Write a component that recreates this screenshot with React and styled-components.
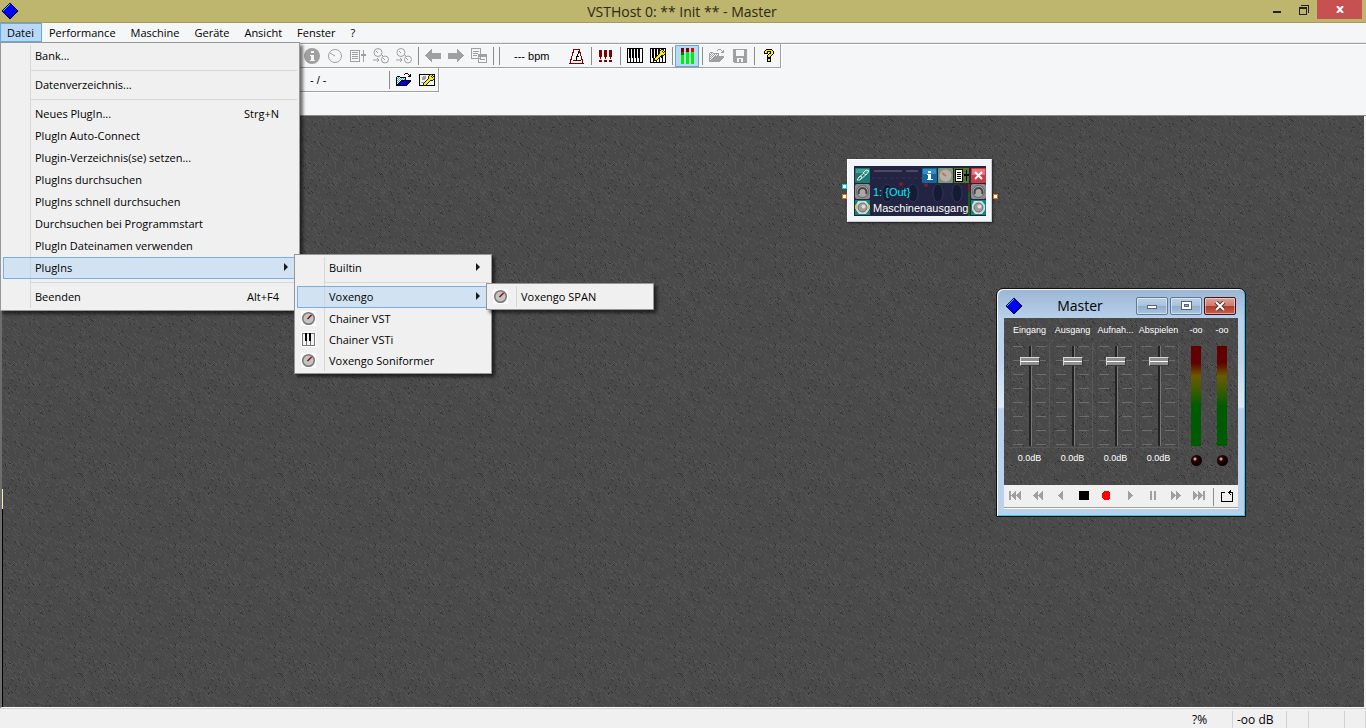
import React from 'react'
import styled, { createGlobalStyle, css } from 'styled-components';

const svgUrl = (svg) => `url("data:image/svg+xml,${encodeURIComponent(svg)}")`;

// Rough slate surface, one seamless 100x100 tile
const makeSlate = () => {
    let seed = 4711;
    const rnd = (n) => {
        seed = (seed * 48271) % 2147483647;
        return Math.floor((seed / 2147483647) * n);
    };
    let light = '';
    let dark = '';
    const streak = (length) => {
        const x = rnd(100);
        const y = rnd(100);
        let d = '';
        for (let i = 0; i < length; i++) {
            d += `M${(x + i) % 100} ${(y + i) % 100}h1v1h-1z`;
        }
        return d;
    };
    for (let i = 0; i < 700; i++) {
        light += rnd(3) ? streak(2 + rnd(3)) : `M${rnd(100)} ${rnd(98)}h1v2h-1z`;
    }
    for (let i = 0; i < 190; i++) {
        dark += streak(rnd(4) ? 1 : 2);
    }
    return svgUrl(`<svg xmlns="http://www.w3.org/2000/svg" width="100" height="100" shape-rendering="crispEdges"><rect width="100" height="100" fill="#494949"/><path d="${light}" fill="#545454"/><path d="${dark}" fill="#303036"/></svg>`);
}

const slate = makeSlate();

const rack = svgUrl(`<svg xmlns="http://www.w3.org/2000/svg" width="132" height="50"><rect width="132" height="50" fill="#232342"/><path d="M20 5h28M52 5h12" stroke="#4a4a68" stroke-width="2"/><path d="M18 12h60M84 11h22" stroke="#35355a" stroke-dasharray="3 3"/><g fill="#151b33" stroke="#30355a"><ellipse cx="33" cy="27" rx="5" ry="9"/><ellipse cx="59" cy="27" rx="5" ry="9"/><ellipse cx="84" cy="27" rx="5" ry="9"/><ellipse cx="103" cy="27" rx="5" ry="9"/></g><g fill="#7a1c3c"><circle cx="47" cy="18" r="2"/><circle cx="72" cy="19" r="2"/></g><path d="M115 24v26" stroke="#1c5a1c" stroke-width="2"/><path d="M115 18v8" stroke="#7a1c1c" stroke-width="2"/></svg>`);

const GlobalStyle = createGlobalStyle`
*{
box-sizing: border-box;
}
body{
margin: 0;
background: #f0f0f0;
color: #000000;
font-family: "Open Sans", sans-serif;
font-size: 11px;
overflow: hidden;
}
button{
font: inherit;
color: inherit;
padding: 0;
border: 0;
background: none;
}
svg{
display: block;
}
ul{
list-style: none;
margin: 0;
padding: 0;
}
`

const Shell = styled.div`
height: 100vh;
display: flex;
flex-direction: column;
`
const TitleBar = styled.header`
height: 23px;
flex: none;
display: grid;
grid-template-columns: 1fr auto 1fr;
background: #beb56e;
border-bottom: 1px solid #a39b58;
padding: 0 4px 0 2px;
`
const AppTitle = styled.h1`
margin: 0;
font-size: 14px;
line-height: 24px;
font-weight: 400;
color: #2b2914;
`
const LogoBox = styled.div`
padding-top: 3px;
`
const Caption = styled.div`
display: flex;
justify-content: flex-end;
align-items: flex-start;
`
const CaptionButton = styled.button`
width: ${(p) => (p.$close ? 45 : 27)}px;
height: 19px;
display: grid;
place-items: center;
background: ${(p) => (p.$close ? '#c75050' : 'transparent')};
`

// Menu bar and its popups
const MenuBar = styled.nav`
flex: none;
height: 20px;
background: #f5f6f7;
display: flex;
border-bottom: 1px solid #e8e9ea;
`
const MenuSlot = styled.div`
position: relative;
`
const MenuButton = styled.button`
height: 19px;
line-height: 16px;
padding: 0 7px 0 6px;
border: 1px solid ${(p) => (p.$open ? '#64a8ea' : 'transparent')};
background: ${(p) => (p.$open ? '#b9d8f7' : 'transparent')};
`
const Popup = styled.ul`
position: absolute;
z-index: 5;
width: ${(p) => p.$width}px;
padding: 2px;
border: 1px solid #979797;
background: linear-gradient(#d7d7d7, #d7d7d7) 29px 2px / 1px calc(100% - 4px) no-repeat #f0f0f0;
box-shadow: 3px 3px 3px rgba(0, 0, 0, 0.55);
${(p) => p.$sub ? css`
left: calc(100% - 3px);
top: -3px;
` : css`
left: 0;
top: 19px;
`}
`
const Row = styled.li`
position: relative;
`
const Entry = styled.button`
width: 100%;
height: ${(p) => (p.$small ? 21 : 22)}px;
display: grid;
grid-template-columns: 32px 1fr auto;
align-items: center;
text-align: left;
padding-right: ${(p) => (p.$arrow ? 9 : 18)}px;
padding-bottom: ${(p) => (p.$small ? 0 : 2)}px;
${(p) => p.$open && css`
background: rgba(178, 214, 246, 0.5);
box-shadow: inset 0 0 0 1px #78aee5;
`}
`
const EntryIcon = styled.span`
margin-left: 4px;
width: 15px;
height: 15px;
background: #ffffff;
`
const Divider = styled.li`
height: 7px;
margin-left: 28px;
border-top: 3px solid #f0f0f0;
background: linear-gradient(#d7d7d7, #d7d7d7) 0 0 / 100% 1px no-repeat;
`
const Arrow = styled.span`
border-left: 4px solid #1a1a1a;
border-top: 4px solid transparent;
border-bottom: 4px solid transparent;
`

// Tool bars
const Bands = styled.section`
flex: none;
height: 73px;
background: #f5f6f7;
border-top: 1px solid #a0a0a0;
border-bottom: 1px solid #8a8a8a;
box-shadow: inset 0 1px #ffffff;
`
const Band = styled.div`
width: fit-content;
height: 24px;
display: flex;
align-items: center;
padding: 0 0 0 300px;
border-right: 1px solid #a0a0a0;
border-bottom: 1px solid #a0a0a0;
box-shadow: 1px 1px #ffffff;
`
const Tool = styled.button`
width: ${(p) => (p.$active ? 24 : 23)}px;
height: 22px;
display: grid;
place-items: center;
${(p) => p.$active && css`
background: #b9d8f7;
border: 1px solid #64a8ea;
`}
`
const Split = styled.span`
width: 6px;
height: 18px;
background: linear-gradient(#8c8c8c, #8c8c8c) 3px 0 / 1px 100% no-repeat;
`
const Readout = styled.output`
width: ${(p) => p.$width}px;
padding-left: ${(p) => p.$indent}px;
font-family: "Liberation Sans", sans-serif;
line-height: 20px;
white-space: nowrap;
`

const Workspace = styled.main`
flex: 1;
position: relative;
display: flex;
flex-direction: column;
border-left: 2px solid #6d6d6d;
border-right: 2px solid #f4f4f4;
border-bottom: 1px solid #ffffff;
background: ${slate};
`
const Edge = styled.span`
width: 1px;
height: 20px;
margin-top: auto;
background: #f4f2a8;
`
const EdgeDark = styled.span`
width: 1px;
height: calc(100% - 393px);
background: #000000;
`

// Patch module
const Module = styled.section`
position: absolute;
left: 845px;
top: 43px;
width: 145px;
padding: 6px 5px 5px 6px;
background: #f2f5fa;
border: 1px solid #c8cacf;
border-top-color: #ffffff;
border-left-color: #ffffff;
box-shadow: 1px 1px 2px rgba(0, 0, 0, 0.6);
`
const ModuleFace = styled.div`
background: ${rack};
padding: 2px 0 0 1px;
color: #ffffff;
font-family: "Liberation Sans", sans-serif;
font-size: 11px;
`
const ModuleLine = styled.div`
display: flex;
height: 16px;
align-items: center;
`
const ModuleText = styled.span`
flex: 1;
padding-left: 2px;
white-space: nowrap;
color: ${(p) => p.$color};
`
const ModuleButton = styled.button`
width: 16px;
height: 16px;
`
const Port = styled.span`
position: absolute;
width: 5px;
height: 5px;
border: 1px solid ${(p) => p.$color};
background: #ffffff;
top: ${(p) => p.$top}px;
${(p) => p.$side}: ${(p) => (p.$side === 'left' ? -6 : -7)}px;
`

// Master window
const Window = styled.section`
position: absolute;
left: 994px;
top: 172px;
width: 250px;
padding: 1px 7px 7px;
border: 1px solid #101010;
border-radius: 7px 7px 0 0;
background: linear-gradient(#9ab6d4, #b9d1ea 30px, #bdd3ec 70px, #dfeaf6 118px, #b9d1ea 120px);
box-shadow: inset 1px 1px #f4f8fc, inset -1px -1px #41c4e6;
`
const WindowBar = styled.header`
height: 28px;
display: grid;
grid-template-columns: 18px 1fr 100px;
align-items: center;
padding: 3px 2px 0;
`
const WindowTitle = styled.h2`
margin: 0;
font-size: 14px;
font-weight: 400;
line-height: 22px;
text-align: center;
`
const WindowButtons = styled.div`
display: flex;
justify-content: space-between;
`
const WindowButton = styled.button`
width: 32px;
height: 18px;
display: grid;
place-items: center;
border: 1px solid ${(p) => (p.$close ? '#43121c' : '#5f7896')};
border-radius: 2px;
box-shadow: inset 0 0 0 1px rgba(255, 255, 255, 0.45);
background: ${(p) => (p.$close
        ? 'linear-gradient(#dca094, #cf7b69 48%, #b43a27 50%, #c4604c)'
        : 'linear-gradient(#bcd0e6, #a9c2dc 48%, #8dadcd 50%, #a9c5e0)')};
`
const Mixer = styled.div`
display: flex;
height: 167px;
padding: 6px 3px 0 4px;
background: ${slate};
color: #ffffff;
font-family: "Liberation Sans", sans-serif;
font-size: 9px;
text-align: center;
`
const Strip = styled.div`
width: ${(p) => (p.$meter ? 26 : 43)}px;
margin-left: ${(p) => (p.$first ? 3 : 0)}px;
display: flex;
flex-direction: column;
align-items: center;
`
const StripLabel = styled.label`
line-height: 12px;
white-space: nowrap;
margin-bottom: 6px;
`
const Slot = styled.div`
width: 40px;
height: 106px;
padding: 3px 0;
display: flex;
justify-content: center;
border: 1px solid #454545;
border-right-color: #585858;
border-bottom-color: #585858;
background:
repeating-linear-gradient(#6c6c6c 0 1px, transparent 1px 14px) 2px 3px / 10px 100px no-repeat,
repeating-linear-gradient(#6c6c6c 0 1px, transparent 1px 14px) 25px 3px / 10px 100px no-repeat,
linear-gradient(90deg, #222222 0 2px, #787878 2px 3px) 18px 3px / 3px 100px no-repeat;
`
const Fader = styled.input`
appearance: none;
writing-mode: vertical-lr;
direction: rtl;
width: 20px;
height: 100px;
margin: 0;
background: transparent;
&::-webkit-slider-thumb{
appearance: none;
width: 20px;
height: 9px;
border: 1px solid #3a3a3a;
border-top-color: #d8d8d8;
border-left-color: #d8d8d8;
background: linear-gradient(#8e8e8e 0 3px, #ffffff 3px 4px, #8e8e8e 4px);
}
`
const Decibel = styled.output`
line-height: 12px;
margin-top: 4px;
`
const Level = styled.div`
width: 10px;
height: 100px;
margin-top: 4px;
background: linear-gradient(#600000 0 17px, #6a5a00 30px, #3c5c00 44px, #005a00 60px);
`
const Led = styled.span`
width: 11px;
height: 11px;
margin-top: 9px;
border-radius: 50%;
background: radial-gradient(circle at 4px 4px, #c0a0a0 0 1px, #300808 2px, #120000 5px);
`
const Transport = styled.div`
display: flex;
align-items: center;
height: 24px;
background: #f0f0f0;
border-bottom: 1px solid #ffffff;
box-shadow: inset 0 -1px #a0a0a0;
`
const Key = styled.button`
width: ${(p) => (p.$last ? 21 : 23)}px;
height: 18px;
margin-bottom: 2px;
padding-right: ${(p) => (p.$last ? 0 : 2)}px;
display: grid;
place-items: center;
`
const KeySplit = styled.span`
flex: 1;
height: 18px;
background: linear-gradient(#8c8c8c, #8c8c8c) 2px 0 / 1px 100% no-repeat;
`

const StatusBar = styled.footer`
flex: none;
height: 20px;
display: flex;
justify-content: flex-end;
background: #f0f0f0;
border-top: 1px solid #d7d7d7;
padding-top: 2px;
font-size: 12px;
`
const StatusCell = styled.span`
width: ${(p) => p.$width}px;
padding-left: 4px;
line-height: 18px;
border-right: 1px solid #d2d2d2;
`

// Draws a small picture from rows of palette letters
const Pixels = ({ rows, colors }) => (
    <svg width={rows[0].length} height={rows.length} shapeRendering="crispEdges" aria-hidden="true">
        {rows.map((row, y) => row.split('').map((c, x) => (
            colors[c] ? <rect key={`${x}-${y}`} x={x} y={y} width="1" height="1" fill={colors[c]} /> : null
        )))}
    </svg>
)

const folder = [
    '.........kkk....',
    '........k...k.k.',
    '.............kk.',
    '.kkk........kkk.',
    'kwcwkkkkkk......',
    'kcwcwcwcwk......',
    'kwcwcwcwck......',
    'kcwcwkkkkkkkkkk.',
    'kwcwkbbbbbbbbbk.',
    'kcwkbbbbbbbbbk..',
    'kwkbbbbbbbbbk...',
    'kkbbbbbbbbbk....',
    'kkkkkkkkkkk.....',
];
const help = [
    '..kkkkkk..',
    '.kyyyyyyk.',
    'kyykkkkyyk',
    'kyyk..kyyk',
    'kkkk.kkyyk',
    '....kyyyk.',
    '...kyyyk..',
    '...kyyk...',
    '...kkkk...',
    '...kkkk...',
    '...kyyk...',
    '...kyyk...',
    '...kkkk...',
];
const wrench = [
    '.......kkk..',
    '......kyyk..',
    '.....kyyk.kk',
    '.....kyyykyk',
    '.....kyyyyyk',
    '....kyyyyyk.',
    '...kyyykkk..',
    '..kyyyk.....',
    '.kyyyk......',
    'kyyyk.......',
    'kyyk........',
    'kkk.........',
];
const diamond = [
    '.......kk.......',
    '......kcbk......',
    '.....kcbbbk.....',
    '....kcbbbbbk....',
    '...kcbbbbbbbk...',
    '..kcbbbbbbbbbk..',
    '.kcbbbbbbbbbbbk.',
    'kcbbbbbbbbbbbbbk',
    'kbbbbbbbbbbbbbdk',
    '.kbbbbbbbbbbbdk.',
    '..kbbbbbbbbbdk..',
    '...kbbbbbbbdk...',
    '....kbbbbbdk....',
    '.....kbbbdk.....',
    '......kbdk......',
    '.......kk.......',
];

const Diamond = () => <Pixels rows={diamond} colors={{ k: '#000030', c: '#20d0f8', b: '#0000f8', d: '#0000a0' }} />

const Wrench = ({ x = 4, y = 1 }) => wrench.map((row, j) => row.split('').map((c, i) => (
    c === '.' ? null : <rect key={`${i}-${j}`} x={x + i} y={y + j} width="1" height="1" fill={c === 'k' ? '#202000' : '#f8f000'} />
)))

const Icon = ({ children, w = 16, h = 16, soft }) => (
    <svg width={w} height={h} viewBox={`0 0 ${w} ${h}`} fill="none" stroke="none" shapeRendering={soft ? 'auto' : 'crispEdges'} aria-hidden="true">
        {children}
    </svg>
)

const grey = '#a0a0a0';

const InfoIcon = () => <Icon soft><circle cx="8" cy="8" r="8" fill={grey} /><path d="M7 3h3v2H7zM6 7h4v5h1v1H6v-1h1V8H6z" fill="#f5f6f7" /></Icon>
const DialIcon = () => <Icon soft><circle cx="8" cy="8" r="6.5" stroke={grey} /><path d="M3 5l5 3" stroke={grey} /></Icon>
const ListIcon = () => (
    <Icon>
        <path d="M0 2h10v12H0zM1 3v10h8V3z" fill={grey} fillRule="evenodd" />
        <path d="M2 4h6v1H2zM2 6h6v1H2zM2 8h6v1H2zM2 10h6v1H2zM13 2h1v12h-1zM11 6h5v2h-5z" fill={grey} />
    </Icon>
)
const ChainIcon = () => (
    <Icon soft>
        <g stroke={grey}><circle cx="5" cy="4.5" r="4" /><circle cx="12" cy="11.500" r="3.500" /><path d="M3 3l2 2M8 6l3 3M10 10l2 2M0 12h6M4 10l2 2-2 2" /></g>
    </Icon>
)
const BackIcon = () => <Icon><path d="M0 7.500L7 1v4h9v6H7v4z" fill={grey} /></Icon>
const NextIcon = () => <Icon><path d="M16 7.500L9 1v4H0v6h9v4z" fill={grey} /></Icon>
const PagesIcon = () => (
    <Icon>
        <g stroke={grey}><path d="M.5.5h9v10h-9zM7.500 6.500h8v8h-8z" fill="#f5f6f7" /><path d="M2 3.500h6M2 5.500h5M2 7.500h4M8 8.500h7M9 11.500h5" /></g>
        <path d="M8 7h7v2H8z" fill={grey} />
    </Icon>
)
const MetronomeIcon = () => (
    <Icon>
        <path d="M5 1h5l4 14H1zM4 12h8" stroke="#800000" />
        <path d="M9 3v3l-2 4v3M8 8h2" stroke="#000000" />
    </Icon>
)
const AlertIcon = () => <Icon w={13} h={12}><path d="M0 0h3v7H2v2H1V7H0zM5 0h3v7H7v2H6V7H5zM10 0h3v7h-1v2h-1V7h-1zM0 10h3v2H0zM5 10h3v2H5zM10 10h3v2h-3z" fill="#800000" /></Icon>
const PianoKeys = () => (
    <>
        <path d="M0 0h16v15H0z" fill="#000000" />
        <path d="M1 1h1v9h1v4H1zM4 1h1v9h1v4H4zM7 1h1v9h1v4H7zM10 1h1v9h1v4h-2zM13 1h2v13h-2z" fill="#ffffff" />
    </>
)
const PianoIcon = () => <Icon h={15}><PianoKeys /></Icon>
const PianoWrenchIcon = () => <Icon h={15}><PianoKeys /><Wrench /></Icon>
const LevelsIcon = () => (
    <Icon w={13} h={16}>
        <path d="M0 0h3v4H0zM5 0h3v4H5z" fill="#800000" /><path d="M10 0h3v4h-3z" fill="#f00000" />
        <path d="M0 4h3v3H0z" fill="#107010" /><path d="M0 7h3v9H0zM5 4h3v12H5zM10 4h3v12h-3z" fill="#00f000" />
    </Icon>
)
const DiskIcon = () => <Icon w={14} h={14}><path d="M0 0h14v14H1l-1-1zM3 1v6h8V1zM4 9v4h2v-3h2v3h2V9z" fill={grey} fillRule="evenodd" /></Icon>
const CardWrenchIcon = () => (
    <Icon h={14}><path d="M.5 1.500h15v11H.5z" fill="#f4f4f4" stroke="#000000" /><circle cx="5" cy="5" r="2" fill={grey} /><path d="M2 9h4v1H2z" fill={grey} /><Wrench x={4} y={1} /></Icon>
)
const FolderIcon = ({ off }) => (
    <Pixels rows={folder} colors={off ? { k: grey, c: grey, b: grey } : { k: '#000000', w: '#e8ffff', c: '#40b0b0', b: '#0000d8' }} />
)

const KnobIcon = () => (
    <Icon w={15} h={15} soft><circle cx="7.500" cy="7.500" r="5.800" fill="#c4c4c4" stroke="#777777" strokeWidth="1.500" /><path d="M6.500 8l4-4" stroke="#900000" strokeWidth="1.500" /></Icon>
)
const KeysIcon = () => (
    <Icon w={15} h={15}><path d="M1 1h13v13H1z" fill="#777777" /><path d="M2 2h3v11H2zM6 2h3v11H6zM10 2h3v11h-3z" fill="#f4f4f4" /><path d="M4 1h2v8H4zM8 1h2v8H8z" fill="#000000" /></Icon>
)

// Module artwork, 16x16 tiles
const LinkTile = () => (
    <Icon soft><rect width="15" height="15" rx="1" fill="#1c7a70" /><path d="M1 1h13v4H1z" fill="#45a097" /><path d="M3 10l6-5M6 11l6-5M2 12l3-4 2 1-2 3zM8 5l3-3 3 1-3 4z" stroke="#dfe8e8" /></Icon>
)
const DinTile = ({ x = 0 }) => (
    <Icon soft><g transform={`translate(${x} 0)`}><rect width="15" height="15" rx="2" fill="#8c8c8c" /><circle cx="7.500" cy="7.500" r="6" fill="#a8a8a8" stroke="#666666" /><path d="M4 10a4 4 0 1 1 7 0" stroke="#444444" strokeWidth="2" /></g></Icon>
)
const SpeakerTile = ({ lit, x = 0 }) => (
    <Icon soft><g transform={`translate(${x} 0)`}><rect width="15" height="15" fill="#12857b" /><path d="M3 1h8l3 4v5l-3 4H4l-3-4V5z" fill="#d4d8d6" /><circle cx="7.500" cy="7.500" r="4.500" fill="#9a9e9c" stroke="#6c706e" /><circle cx="8.500" cy="6.500" r="2" fill="#dcdcdc" />{lit && <path d="M0 5h2v4H0zM13 5h2v4h-2z" fill="#d8c830" />}</g></Icon>
)
const InfoTile = () => (
    <Icon soft><rect width="15" height="15" rx="1" fill="#1466a0" /><path d="M1 1h13v5H1z" fill="#3a8cc0" /><path d="M6 3h3v2H6zM5 6h4v5h2v1H5v-1h1V7H5z" fill="#ffffff" /></Icon>
)
const DialTile = () => (
    <Icon soft><rect width="15" height="15" rx="1" fill="#7c9478" /><circle cx="7.500" cy="7.500" r="6" fill="#b8b0a8" /><path d="M4 5l4 3" stroke="#c47070" strokeWidth="2" /></Icon>
)
const ParamTile = () => (
    <Icon><rect width="15" height="15" fill="#50781c" /><path d="M1 1h8v13H1z" fill="#000000" /><path d="M2 2h6v11H2z" fill="#ffffff" /><path d="M3 4h4v1H3zM3 6h4v1H3zM3 8h4v1H3zM3 10h4v1H3zM12 2h1v11h-1zM10 6h5v2h-5z" fill="#000000" /></Icon>
)
const CloseTile = () => (
    <Icon soft><rect x="1" width="15" height="15" rx="1" fill="#c83c48" /><path d="M2 1h13v6H2z" fill="#e07880" /><path d="M5 4l7 7M12 4l-7 7" stroke="#ffffff" strokeWidth="2" /></Icon>
)

const transport = [
    { name: 'Anfang', d: 'M0 0h2v9H0zM2 4.500L7 0v9zM7 4.500L12 0v9z' },
    { name: 'Zurückspulen', d: 'M1 4.500L6 0v9zM6 4.500L11 0v9z' },
    { name: 'Rückwärts', d: 'M3 4.500L8 0v9z' },
    { name: 'Stopp', d: 'M1 0h10v9H1z', color: '#000000' },
    { name: 'Aufnahme', d: 'M3 0h4l2 2v5l-2 2H3L1 7V2z', color: '#ff0000' },
    { name: 'Wiedergabe', d: 'M4 0l5 4.500L4 9z' },
    { name: 'Pause', d: 'M3 0h2v9H3zM7 0h2v9H7z' },
    { name: 'Vorspulen', d: 'M1 0l5 4.500L1 9zM6 0l5 4.500L6 9z' },
    { name: 'Ende', d: 'M0 0l5 4.500L0 9zM5 0l5 4.500L5 9zM10 0h2v9h-2z' },
];

const menus = ['Performance', 'Maschine', 'Geräte', 'Ansicht', 'Fenster', '?'];

const fileMenu = [
    { name: 'Bank...' },
    null,
    { name: 'Datenverzeichnis...' },
    null,
    { name: 'Neues PlugIn...', keys: 'Strg+N' },
    { name: 'PlugIn Auto-Connect' },
    { name: 'Plugin-Verzeichnis(se) setzen...' },
    { name: 'PlugIns durchsuchen' },
    { name: 'PlugIns schnell durchsuchen' },
    { name: 'Durchsuchen bei Programmstart' },
    { name: 'PlugIn Dateinamen verwenden' },
    {
        name: 'PlugIns',
        width: 198,
        items: [
            { name: 'Builtin', arrow: true },
            null,
            { name: 'Voxengo', width: 168, items: [{ name: 'Voxengo SPAN', icon: <KnobIcon /> }] },
            { name: 'Chainer VST', icon: <KnobIcon /> },
            { name: 'Chainer VSTi', icon: <KeysIcon /> },
            { name: 'Voxengo Soniformer', icon: <KnobIcon /> },
        ],
    },
    null,
    { name: 'Beenden', keys: 'Alt+F4' },
];

const Menu = ({ items, width, sub }) => (
    <Popup $width={width} $sub={sub}>
        {items.map((item, id) => {
            if (!item) return <Divider key={id} />
            const arrow = item.arrow || item.items;
            return (
                <Row key={id}>
                    <Entry $small={item.icon} $open={item.items} $arrow={arrow}>
                        {item.icon ? <EntryIcon>{item.icon}</EntryIcon> : <span />}
                        <span>{item.name}</span>
                        {arrow ? <Arrow /> : <span>{item.keys}</span>}
                    </Entry>
                    {item.items && <Menu items={item.items} width={item.width} sub />}
                </Row>
            )
        })}
    </Popup>
)

const Master = () => (
    <Window>
        <WindowBar>
            <Diamond />
            <WindowTitle>Master</WindowTitle>
            <WindowButtons>
                <WindowButton aria-label="Minimieren"><Icon w={12} h={8}><path d="M1.500 3.500h9v3h-9z" fill="#ffffff" stroke="#5a6470" /></Icon></WindowButton>
                <WindowButton aria-label="Maximieren"><Icon w={11} h={9}><path d="M.5.5h10v8H.5z" fill="#ffffff" stroke="#5a6470" /><path d="M3.500 3.500h4v2h-4z" fill="#8dadcd" stroke="#5a6470" /></Icon></WindowButton>
                <WindowButton $close aria-label="Schließen"><Icon w={12} h={10} soft><path d="M2 1l8 8M10 1L2 9" stroke="#5a3030" strokeWidth="4" /><path d="M2 1l8 8M10 1L2 9" stroke="#ffffff" strokeWidth="2" /></Icon></WindowButton>
            </WindowButtons>
        </WindowBar>
        <Mixer>
            {['Eingang', 'Ausgang', 'Aufnah...', 'Abspielen'].map((name, id) => (
                <Strip key={name}>
                    <StripLabel htmlFor={`fader-${id}`}>{name}</StripLabel>
                    <Slot><Fader id={`fader-${id}`} type="range" min="0" max="100" defaultValue="88" /></Slot>
                    <Decibel>0.0dB</Decibel>
                </Strip>
            ))}
            {[0, 1].map((id) => (
                <Strip key={id} $meter $first={id === 0}>
                    <StripLabel as="span">-oo</StripLabel>
                    <Level />
                    <Led />
                </Strip>
            ))}
        </Mixer>
        <Transport>
            {transport.map(({ name, d, color }) => (
                <Key key={name} aria-label={name}><Icon w={12} h={9}><path d={d} fill={color || grey} /></Icon></Key>
            ))}
            <KeySplit />
            <Key $last aria-label="Schleife"><Icon w={13} h={12}><path d="M4 2.500H.5v8.500h11V2.500H9M10 .5L7.500 2.500 10 5M7 2.500h3" stroke="#000000" /></Icon></Key>
        </Transport>
    </Window>
)

const Output = () => (
    <Module>
        <Port $side="left" $top={24} $color="#10c8d8" />
        <Port $side="left" $top={34} $color="#e07010" />
        <Port $side="right" $top={34} $color="#e07010" />
        <ModuleFace>
            <ModuleLine>
                <ModuleButton aria-label="Verbinden"><LinkTile /></ModuleButton>
                <ModuleText />
                <ModuleButton aria-label="Info"><InfoTile /></ModuleButton>
                <ModuleButton aria-label="Editor"><DialTile /></ModuleButton>
                <ModuleButton aria-label="Parameter"><ParamTile /></ModuleButton>
                <ModuleButton aria-label="Entfernen"><CloseTile /></ModuleButton>
            </ModuleLine>
            <ModuleLine>
                <ModuleButton aria-label="MIDI Eingang"><DinTile /></ModuleButton>
                <ModuleText $color="#00f0f0">1: {'{Out}'}</ModuleText>
                <ModuleButton aria-label="MIDI Ausgang"><DinTile x={1} /></ModuleButton>
            </ModuleLine>
            <ModuleLine>
                <ModuleButton aria-label="Audio Eingang"><SpeakerTile lit /></ModuleButton>
                <ModuleText $color="#ffffff">Maschinenausgang</ModuleText>
                <ModuleButton aria-label="Audio Ausgang"><SpeakerTile x={1} /></ModuleButton>
            </ModuleLine>
        </ModuleFace>
    </Module>
)

const App = () => {
    return (
        <>
            <GlobalStyle />
            <Shell>
                <TitleBar>
                    <LogoBox><Diamond /></LogoBox>
                    <AppTitle>VSTHost 0: ** Init ** - Master</AppTitle>
                    <Caption>
                        <CaptionButton aria-label="Minimieren"><Icon w={8} h={6}><path d="M0 4h8v2H0z" fill="#222222" /></Icon></CaptionButton>
                        <CaptionButton aria-label="Wiederherstellen"><Icon w={10} h={10}><path d="M2 0h8v8H9V1H2zM0 2h8v8H0zM1 4v5h6V4z" fill="#222222" fillRule="evenodd" /></Icon></CaptionButton>
                        <CaptionButton $close aria-label="Schließen"><Icon w={8} h={7} soft><path d="M1 0l6 7M7 0L1 7" stroke="#ffffff" strokeWidth="2" /></Icon></CaptionButton>
                    </Caption>
                </TitleBar>
                <MenuBar>
                    <MenuSlot>
                        <MenuButton $open>Datei</MenuButton>
                        <Menu items={fileMenu} width={300} />
                    </MenuSlot>
                    {menus.map((name) => <MenuButton key={name}>{name}</MenuButton>)}
                </MenuBar>
                <Bands>
                    <Band>
                        <Tool aria-label="Info"><InfoIcon /></Tool>
                        <Tool aria-label="Editor"><DialIcon /></Tool>
                        <Tool aria-label="Parameter"><ListIcon /></Tool>
                        <Tool aria-label="Verketten"><ChainIcon /></Tool>
                        <Tool aria-label="Neu verketten"><ChainIcon /></Tool>
                        <Split />
                        <Tool aria-label="Zurück"><BackIcon /></Tool>
                        <Tool aria-label="Weiter"><NextIcon /></Tool>
                        <Tool aria-label="Programme"><PagesIcon /></Tool>
                        <Split />
                        <Split />
                        <Readout $width={63} $indent={12}>--- bpm</Readout>
                        <Tool aria-label="Metronom"><MetronomeIcon /></Tool>
                        <Split />
                        <Tool aria-label="Panik"><AlertIcon /></Tool>
                        <Split />
                        <Tool aria-label="Tastatur"><PianoIcon /></Tool>
                        <Tool aria-label="Tastatur einrichten"><PianoWrenchIcon /></Tool>
                        <Split />
                        <Tool $active aria-label="Pegel"><LevelsIcon /></Tool>
                        <Split />
                        <Tool aria-label="Laden"><FolderIcon off /></Tool>
                        <Tool aria-label="Speichern"><DiskIcon /></Tool>
                        <Split />
                        <Tool aria-label="Hilfe"><Pixels rows={help} colors={{ k: '#000000', y: '#f8f000' }} /></Tool>
                    </Band>
                    <Band>
                        <Readout $width={86} $indent={10}>- / -</Readout>
                        <Split />
                        <Tool aria-label="Datei laden"><FolderIcon /></Tool>
                        <Tool aria-label="Datei einrichten"><CardWrenchIcon /></Tool>
                    </Band>
                </Bands>
                <Workspace>
                    <Edge />
                    <EdgeDark />
                    <Output />
                    <Master />
                </Workspace>
                <StatusBar>
                    <StatusCell $width={45}>?%</StatusCell>
                    <StatusCell $width={54}>-oo dB</StatusCell>
                    <StatusCell $width={22} />
                    <StatusCell $width={36} />
                    <StatusCell $width={21} />
                </StatusBar>
            </Shell>
        </>
    )
}

export default App
